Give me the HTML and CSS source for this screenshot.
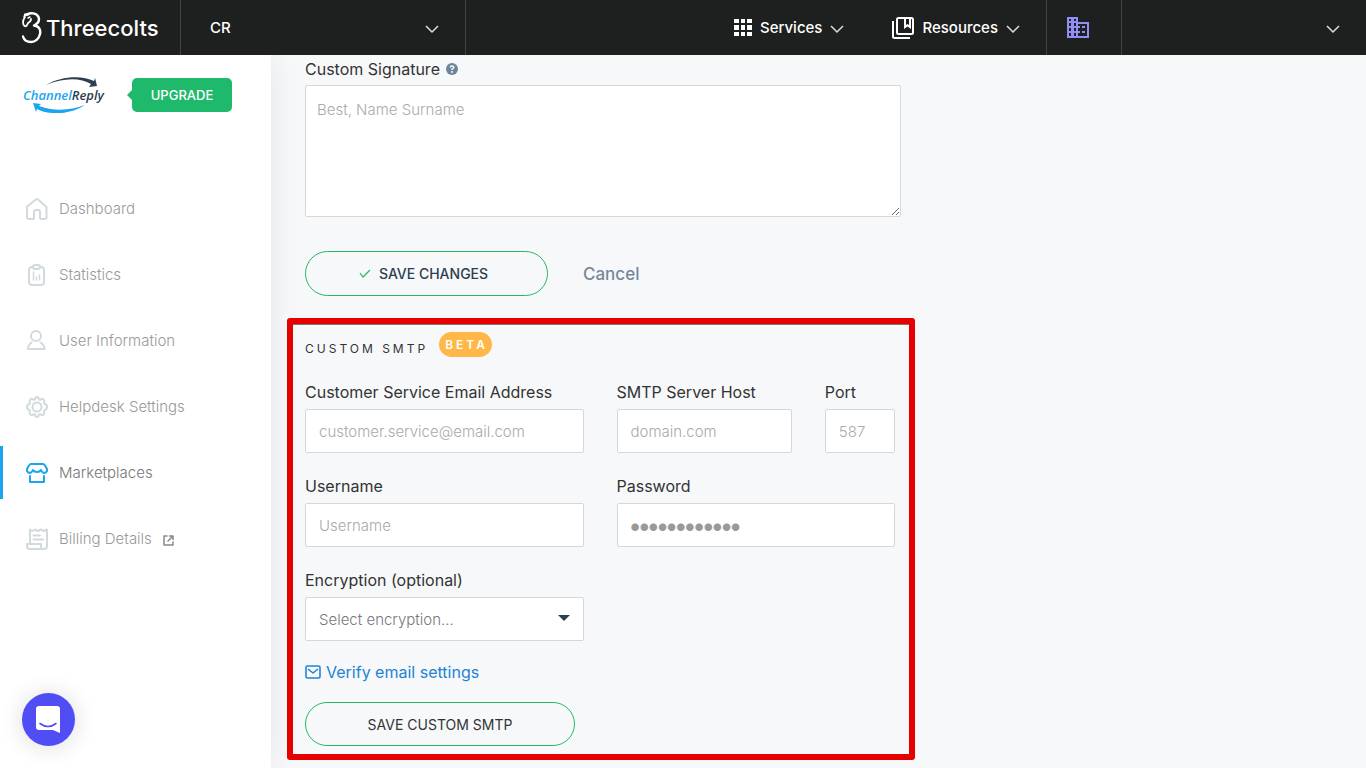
FILE: index.html
```html
<!DOCTYPE html>
<html lang="en">
<head>
    <meta charset="UTF-8">
    <meta name="viewport" content="width=device-width, initial-scale=1.0">
    <title>ChannelReply - Marketplaces</title>
    <link rel="stylesheet" href="styles.css">
</head>
<body>
    <header class="topbar">
        <a class="brand" href="#">
            <svg width="20" height="32" viewBox="0 0 20 32" fill="none" stroke="#fff" stroke-linecap="round" stroke-linejoin="round">
                <path d="M4 3C8 0 15 1 16.500 5c1.500 4-1.500 7-4.500 8.500 5 .5 7 4.500 6 8.500-1 5-5 8-9 8-4 0-7-2-8-5.500" stroke-width="2.400"/>
                <path d="M3 5C0 9 1 13 2.500 14c2 1 2.500-1 3.500-3 2-1 3-2 3-4" stroke-width="1.800"/>
                <path d="M2 5l1-3 3 1M6 6l2-1" stroke-width="1.500"/>
            </svg>
            <span>Threecolts</span>
        </a>
        <button class="account" type="button">
            <span>CR</span>
            <svg class="chevron" width="14" height="9" viewBox="0 0 14 9"><path d="M1 1l6 6 6-6"/></svg>
        </button>
        <nav class="topnav">
            <button type="button">
                <svg width="18" height="17" viewBox="0 0 18 17" fill="#fff">
                    <path d="M0 0h5v4H0zM7 0h4v4H7zM13 0h5v4h-5zM0 6h5v5H0zM7 6h4v5H7zM13 6h5v5h-5zM0 13h5v4H0zM7 13h4v4H7zM13 13h5v4h-5z"/>
                </svg>
                <span>Services</span>
                <svg class="chevron" width="14" height="9" viewBox="0 0 14 9"><path d="M1 1l6 6 6-6"/></svg>
            </button>
            <button type="button">
                <svg width="22" height="22" viewBox="0 0 22 22" fill="none" stroke="#fff" stroke-width="2">
                    <rect x="5" y="1" width="16" height="16" rx="1.5"/>
                    <path d="M1 4v15.500q0 1.500 1.500 1.500H18"/>
                    <path d="M12 1h7v11l-3.500-2.500L12 12z" fill="#fff" stroke="none"/>
                    <path d="M14 2h3v6l-1.500-1L14 8z" fill="#1e1f1f" stroke="none"/>
                </svg>
                <span>Resources</span>
                <svg class="chevron" width="14" height="9" viewBox="0 0 14 9"><path d="M1 1l6 6 6-6"/></svg>
            </button>
        </nav>
        <button class="company" type="button" aria-label="Company">
            <svg width="22" height="21" viewBox="0 0 22 21">
                <path fill="#8f8ff5" fill-rule="evenodd" d="M0 0h11v5h11v16H0zM2 2v2h2V2zM7 2v2h2V2zM2 6v3h2V6zM7 6v3h2V6zM2 11v3h2v-3zM7 11v3h2v-3zM2 16v3h2v-3zM7 16v3h2v-3zM11 7v2h2v2h-2v3h2v2h-2v3h9V7zM15 9h3v2h-3zM15 14h3v2h-3z"/>
            </svg>
        </button>
        <button class="user-menu" type="button" aria-label="User menu">
            <svg class="chevron" width="14" height="9" viewBox="0 0 14 9"><path d="M1 1l6 6 6-6"/></svg>
        </button>
    </header>

    <div class="layout">
        <aside class="sidebar">
            <div class="sidebar-head">
                <svg class="logo" width="84" height="36" viewBox="0 0 84 36">
                    <path d="M23 8C38-1 59-2 71 4l1-3 2 8-8 1 2-3C57 0 39 1 23 8z" fill="#2c3e50"/>
                    <path d="M62 28C49 37 27 39 14 32l-1 3-3-9 8 1-2 2c13 5 31 5 46-1z" fill="#1ba5f0"/>
                    <text x="0" y="23" class="logo-text" fill="#1ba5f0">Channel<tspan fill="#2c3e50">Reply</tspan></text>
                </svg>
                <a class="upgrade" href="#">UPGRADE</a>
            </div>
            <nav class="menu">
                <a href="#">
                    <svg width="22" height="22" viewBox="0 0 22 22"><path d="M1 8.500L10 1.500q1-.8 2 0L20 8.500q.5.500.5 1V19q0 2-2 2H15q-1 0-1-1v-6q0-2-2-2h-2q-2 0-2 2v6q0 1-1 1H3q-2 0-2-2z"/></svg>
                    <span>Dashboard</span>
                </a>
                <a href="#">
                    <svg width="22" height="22" viewBox="0 0 22 22"><rect x="3" y="3" width="15" height="18" rx="3"/><rect class="cap" x="7" y="1" width="7" height="4" rx="2"/><path d="M7.500 8v8M10.500 13v3M13.500 11v5" stroke-width="1.500"/></svg>
                    <span>Statistics</span>
                </a>
                <a href="#">
                    <svg width="22" height="22" viewBox="0 0 22 22"><circle cx="10" cy="6" r="5"/><path d="M5.500 12.500Q2 15 2 19h16.500q0-4-4-6.500"/></svg>
                    <span>User Information</span>
                </a>
                <a href="#">
                    <svg width="22" height="22" viewBox="0 0 22 22"><circle cx="11" cy="11" r="4.500"/><path d="M11 1q1.500 0 2 2.500 1.500.5 2-.2 1.500-1 2.700.3t.5 2.900q-.5 1 .4 1.500 2.400.5 2.400 3t-2.400 3q-.9.500-.4 1.500.7 1.500-.5 2.900t-2.700.3q-.5-.7-2-.2-.5 2.500-2 2.500t-2-2.500q-1.500-.5-2 .2-1.500 1-2.700-.3t-.5-2.900q.5-1-.4-1.500Q1 13.500 1 11t2.400-3q.9-.5.4-1.500-.7-1.500.5-2.900t2.700-.3q.5.700 2 .2.500-2.500 2-2.500z"/></svg>
                    <span>Helpdesk Settings</span>
                </a>
                <a href="#" class="active">
                    <svg width="22" height="22" viewBox="0 0 22 22"><path d="M5 2h12q1 0 2 1.500l2 3.500v2q-1 2-3 2-2-.5-3-3-1 2-4 2T7 8q-1 2.500-3 3-2 0-3-2V7l2-3.500Q4 2 5 2z"/><path d="M4 14v6h14v-6"/></svg>
                    <span>Marketplaces</span>
                </a>
                <a href="#">
                    <svg width="22" height="22" viewBox="0 0 22 22"><path d="M4 15V1.500l2.500 1.500L9 1.500 12 3l3-1.500L18 3l3-1.500V18q0 3-3 3H4q-3 0-3-3v-2h14v3q0 2 2 2M7.500 7.500H14M7.500 11.500H17"/></svg>
                    <span>Billing Details</span>
                    <svg class="external" width="11" height="11" viewBox="0 0 11 11"><path d="M4 1H1v9h9V7M6.500 1H10v3.500M10 1L5 6"/></svg>
                </a>
            </nav>
        </aside>

        <main class="content">
            <form class="signature">
                <label for="signature">Custom Signature
                    <svg width="12" height="12" viewBox="0 0 12 12"><circle cx="6" cy="6" r="6" fill="#6c859b"/><path d="M4.200 4.500Q4.400 3 6 3t1.800 1.400Q7.800 5.300 6 6.200V7" fill="none" stroke="#fff" stroke-width="1.400"/><circle cx="6" cy="9" r="1" fill="#fff"/></svg>
                </label>
                <textarea id="signature" placeholder="Best, Name Surname"></textarea>
                <div class="actions">
                    <button type="submit" class="btn btn-save">
                        <svg width="12" height="9" viewBox="0 0 12 9" fill="none" stroke="#25b86b" stroke-width="1.200"><path d="M1 4l3 4 7-7"/></svg>
                        SAVE CHANGES
                    </button>
                    <a class="cancel" href="#">Cancel</a>
                </div>
            </form>

            <form class="smtp">
                <h2>CUSTOM SMTP <span class="badge">BETA</span></h2>
                <div class="fields">
                    <div class="field">
                        <label for="email">Customer Service Email Address</label>
                        <input type="email" id="email" placeholder="customer.service@email.com">
                    </div>
                    <div class="server">
                        <div class="field">
                            <label for="host">SMTP Server Host</label>
                            <input type="text" id="host" placeholder="domain.com">
                        </div>
                        <div class="field">
                            <label for="port">Port</label>
                            <input type="text" id="port" placeholder="587">
                        </div>
                    </div>
                    <div class="field">
                        <label for="username">Username</label>
                        <input type="text" id="username" placeholder="Username">
                    </div>
                    <div class="field">
                        <label for="password">Password</label>
                        <input type="password" id="password" placeholder="●●●●●●●●●●●●">
                    </div>
                    <div class="field">
                        <label for="encryption">Encryption (optional)</label>
                        <div class="select">
                            <select id="encryption">
                                <option>Select encryption...</option>
                            </select>
                            <svg width="12" height="6" viewBox="0 0 12 6"><path d="M0 0h12L6 6z" fill="#2c3e50"/></svg>
                        </div>
                    </div>
                </div>
                <a class="verify" href="#">
                    <svg width="16" height="14" viewBox="0 0 16 14" fill="none" stroke="#2383d3" stroke-width="1.600" stroke-linejoin="round"><rect x="1" y="1" width="14" height="12" rx="1.500"/><path d="M3 4l5 4 5-4"/></svg>
                    Verify email settings
                </a>
                <button type="submit" class="btn btn-smtp">SAVE CUSTOM SMTP</button>
            </form>
        </main>
    </div>

    <button class="chat" type="button" aria-label="Open chat">
        <svg width="25" height="28" viewBox="0 0 25 28"><path d="M3 0h18q3 0 3 3v24l-7-3H3q-3 0-3-3V3q0-3 3-3z" fill="#fff"/><path d="M4 17.500q8 6 16 0" fill="none" stroke="#4f4df3" stroke-width="1.600" stroke-linecap="round"/></svg>
    </button>
</body>
</html>
```
FILE: styles.css
```css
* {
    margin: 0;
    padding: 0;
    box-sizing: border-box;
}

body {
    min-height: 100vh;
    display: flex;
    flex-direction: column;
    font-family: Inter, sans-serif;
    font-size: 15px;
    background: #f7f8fa;
    color: #333;
}

a {
    color: inherit;
    text-decoration: none;
}

button,
input,
select,
textarea {
    font: inherit;
    color: inherit;
}

button {
    background: none;
    border: none;
    cursor: pointer;
}

/* top bar */
.topbar {
    position: relative;
    z-index: 2;
    display: flex;
    height: 55px;
    background: #1e1f1f;
    color: #fff;
    font-size: 15px;
    font-weight: 500;
}

.brand {
    display: flex;
    align-items: center;
    gap: 4px;
    width: 181px;
    padding-left: 22px;
    border-right: 1px solid #414242;
    font-size: 22px;
}

.account {
    display: flex;
    align-items: center;
    justify-content: space-between;
    width: 285px;
    padding: 0 26px 0 29px;
    border-right: 1px solid #414242;
}

.chevron {
    margin-top: 4px;
    fill: none;
    stroke: #ddd;
    stroke-width: 1.5;
}

.topnav {
    display: flex;
    gap: 48px;
    margin-left: auto;
    padding-right: 26px;
}

.topnav button {
    display: flex;
    align-items: center;
    gap: 8px;
}

.company {
    width: 76px;
    padding-right: 12px;
    border: solid #414242;
    border-width: 0 1px;
}

.company svg {
    display: block;
    margin: auto;
}

.user-menu {
    display: flex;
    align-items: center;
    justify-content: flex-end;
    width: 244px;
    padding-right: 26px;
}

/* sidebar */
.layout {
    display: flex;
    flex: 1;
}

.sidebar {
    width: 271px;
    flex-shrink: 0;
    background: #fff;
    box-shadow: 0 0 30px rgba(0, 0, 0, 0.08);
}

.sidebar-head {
    display: flex;
    align-items: center;
    gap: 25px;
    padding: 22px 0 0 23px;
}

.logo-text {
    font-family: "Open Sans", sans-serif;
    font-size: 13px;
    font-style: italic;
    font-weight: 600;
}

.upgrade {
    position: relative;
    width: 100px;
    border-radius: 5px;
    background: #1fb96c;
    color: #fff;
    font-size: 13px;
    font-weight: 500;
    line-height: 34px;
    text-align: center;
}

.upgrade::before {
    content: "";
    position: absolute;
    left: -5px;
    top: 12px;
    border: 5px solid transparent;
    border-left: none;
    border-right-color: #1fb96c;
}

.menu {
    display: flex;
    flex-direction: column;
    gap: 13px;
    padding-top: 69px;
}

.menu a {
    display: flex;
    align-items: center;
    gap: 11px;
    height: 53px;
    padding-left: 23px;
    border-left: 3px solid transparent;
    color: #999;
    font-weight: 300;
}

.menu svg {
    fill: none;
    stroke: #d2dade;
    stroke-width: 2;
    stroke-linecap: round;
    stroke-linejoin: round;
}

.menu .cap {
    fill: #fff;
}

.menu .active {
    border-left-color: #1ba5f0;
    color: #777;
}

.menu .active svg {
    stroke: #1ba5f0;
}

.menu .external {
    margin-top: 4px;
    stroke: #888;
    stroke-width: 1.5;
}

/* content */
.content {
    flex: 1;
    padding: 4px 16px 8px;
}

label {
    display: block;
    font-size: 16px;
    line-height: 20px;
}

label svg {
    margin-left: 2px;
}

.signature {
    max-width: 614px;
    padding-left: 18px;
}

textarea {
    display: block;
    width: 100%;
    height: 132px;
    margin-top: 6px;
    padding: 14px 11px;
    border: 1px solid #d5d7d9;
    border-radius: 2px;
    background: #fff;
    font-weight: 300;
}

::placeholder {
    color: #aaa;
    opacity: 1;
}

.actions {
    display: flex;
    align-items: center;
    gap: 35px;
    margin-top: 34px;
}

.btn {
    height: 45px;
    border: 1px solid #25b86b;
    border-radius: 23px;
    font-size: 14px;
}

.btn-save {
    display: flex;
    align-items: center;
    justify-content: center;
    gap: 8px;
    width: 243px;
    padding-right: 6px;
    color: #2c3e50;
    font-weight: 500;
}

.cancel {
    color: #75889a;
    font-size: 17px;
    font-weight: 500;
}

.smtp {
    max-width: 628px;
    margin-top: 22px;
    padding: 8px 14px 8px 12px;
    border: 6px solid #e60000;
    border-radius: 3px;
    box-shadow: inset 0 1px #777;
}

.smtp h2 {
    display: flex;
    align-items: flex-end;
    gap: 11px;
    margin-bottom: 25px;
    font-size: 12px;
    font-weight: 400;
    line-height: 16px;
    letter-spacing: 3px;
}

.badge {
    padding: 0 4px 0 6px;
    border-radius: 13px;
    background: #ffb748;
    color: #fff;
    font-size: 12px;
    font-weight: 600;
    line-height: 25px;
    letter-spacing: 3px;
}

.fields {
    display: grid;
    grid-template-columns: 1fr 1fr;
    gap: 23px 33px;
}

.server {
    display: grid;
    grid-template-columns: 5fr 2fr;
    gap: 33px;
}

.field {
    min-width: 0;
}

.field input,
.select {
    margin-top: 7px;
}

.field input,
.field select {
    display: block;
    width: 100%;
    height: 44px;
    padding: 0 13px;
    border: 1px solid #d5d7d9;
    border-radius: 2px;
    background: #fff;
    font-weight: 300;
}

#password::placeholder {
    color: #999;
    font-size: 10px;
}

.select {
    position: relative;
}

.field select {
    appearance: none;
    color: #777;
}

.select svg {
    position: absolute;
    right: 14px;
    top: 18px;
    pointer-events: none;
}

.verify {
    display: flex;
    align-items: center;
    gap: 5px;
    margin: 20px 0 19px;
    color: #2383d3;
    font-size: 16px;
    line-height: 22px;
}

.btn-smtp {
    width: 270px;
    height: 44px;
}

/* chat launcher */
.chat {
    position: fixed;
    left: 22px;
    bottom: 22px;
    z-index: 3;
    display: flex;
    align-items: center;
    justify-content: center;
    width: 53px;
    height: 53px;
    border-radius: 50%;
    background: #4f4df3;
    box-shadow: 0 1px 24px rgba(0, 0, 0, 0.14);
}
```
